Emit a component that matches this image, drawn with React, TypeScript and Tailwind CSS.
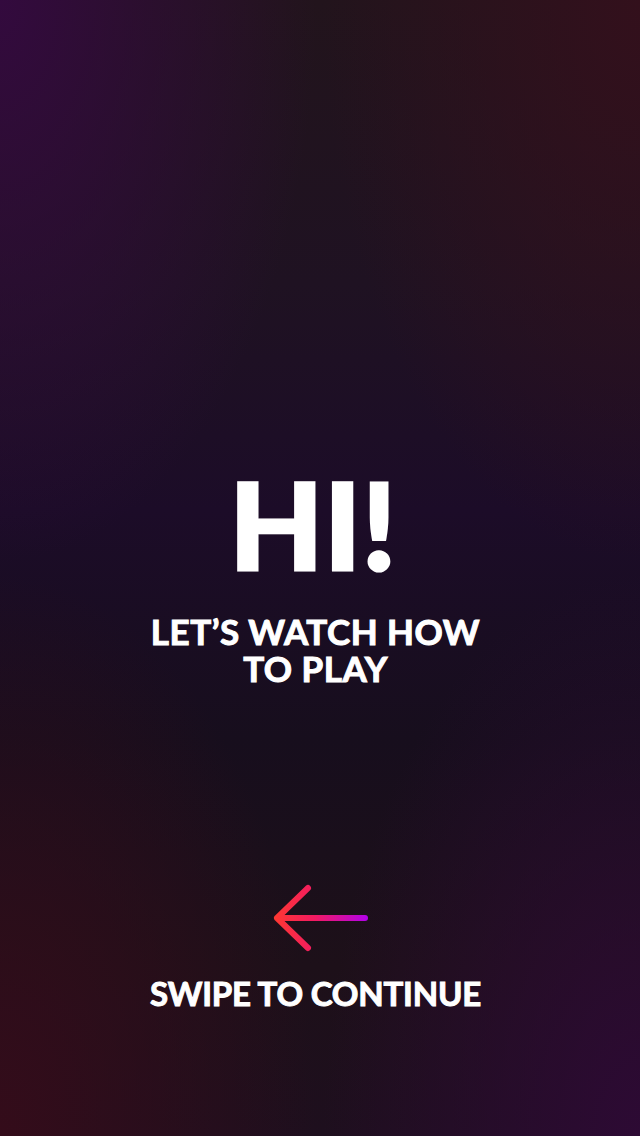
import React from "react";

export default function App() {
  return (
    <div
      className="relative flex h-[1136px] w-[640px] flex-col items-center overflow-hidden bg-[radial-gradient(ellipse_at_0%_0%,#330a3e_0%,rgba(51,10,62,0)_35%),radial-gradient(ellipse_at_100%_0%,#33101c_0%,rgba(51,16,28,0)_35%),radial-gradient(ellipse_at_0%_100%,#340c1a_0%,rgba(52,12,26,0)_35%),radial-gradient(ellipse_at_100%_100%,#2d0a34_0%,rgba(45,10,52,0)_35%),linear-gradient(180deg,#22141c_0%,#1f1222_25%,#1c0c28_45%,#170e1d_65%,#1d1019_85%,#1e0f1e_100%)]"
      style={{ fontFamily: "Lato, 'Open Sans', sans-serif" }}
    >
      <div className="mr-[13px] mt-[463px] text-[121px] font-black leading-none tracking-[1px] text-white [-webkit-text-stroke:3px_white]">
        HI!
      </div>
      <div className="mr-[9px] mt-[29px] flex flex-col items-center text-[35px] font-bold leading-[37px] tracking-[0.5px] text-white [-webkit-text-stroke:1px_white]">
        <span>LET’S WATCH HOW</span>
        <span>TO PLAY</span>
      </div>
      <svg
        className="mt-[196px]"
        width="100"
        height="70"
        viewBox="0 0 100 70"
        fill="none"
      >
        <defs>
          <linearGradient id="ag" x1="0" y1="0" x2="100" y2="0" gradientUnits="userSpaceOnUse">
            <stop offset="0" stopColor="#ff3b2c" />
            <stop offset="0.45" stopColor="#f21a62" />
            <stop offset="1" stopColor="#b000f0" />
          </linearGradient>
        </defs>
        <path
          d="M38 5 L7 35 L38 65 M7 35 L95 35"
          stroke="url(#ag)"
          strokeWidth="6"
          strokeLinecap="round"
          strokeLinejoin="round"
        />
      </svg>
      <div className="mr-[9px] mt-[20px] text-[33px] font-bold leading-[40px] tracking-[-0.2px] text-white [-webkit-text-stroke:1px_white]">
        SWIPE TO CONTINUE
      </div>
    </div>
  );
}
